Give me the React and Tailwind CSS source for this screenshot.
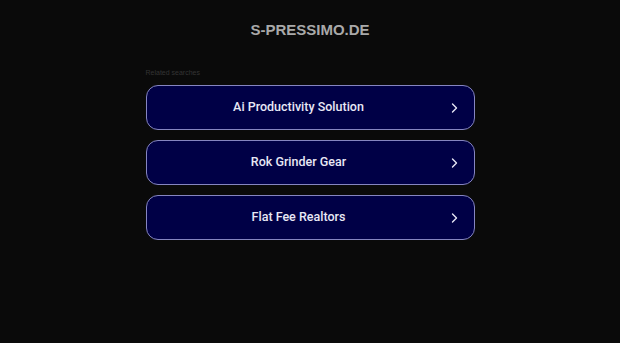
import React from 'react';

const searches = ['Ai Productivity Solution', 'Rok Grinder Gear', 'Flat Fee Realtors'];

const Chevron = () => (
  <svg width="10" height="12" viewBox="0 0 10 12" fill="none" className="absolute right-[15px] top-1/2 -translate-y-1/2">
    <path d="M3.5 2 L7.5 6 L3.5 10" stroke="#e6e6f5" strokeWidth="1.4" strokeLinecap="round" strokeLinejoin="round" />
  </svg>
);

export default function App() {
  return (
    <div className="w-[620px] h-[343px] bg-[#0a0a0a] flex flex-col items-center font-['Liberation_Sans',Arial,sans-serif]">
      <h1 className="mt-[21px] text-[15px] leading-[18px] font-bold text-[#a9a9a9]">S-PRESSIMO.DE</h1>
      <div className="w-[329px] mt-[29px]">
        <p className="text-[7px] leading-[10px] text-[#343434]">Related searches</p>
        <div className="mt-[7px] flex flex-col gap-[10px]">
          {searches.map((s) => (
            <div
              key={s}
              className="relative h-[45px] pr-[23px] rounded-[12px] border border-[#8585c0] bg-[#000046] flex items-center justify-center"
            >
              <span className="font-['Roboto',sans-serif] font-medium text-[12.5px] text-[#e8e8f5]">{s}</span>
              <Chevron />
            </div>
          ))}
        </div>
      </div>
    </div>
  );
}
